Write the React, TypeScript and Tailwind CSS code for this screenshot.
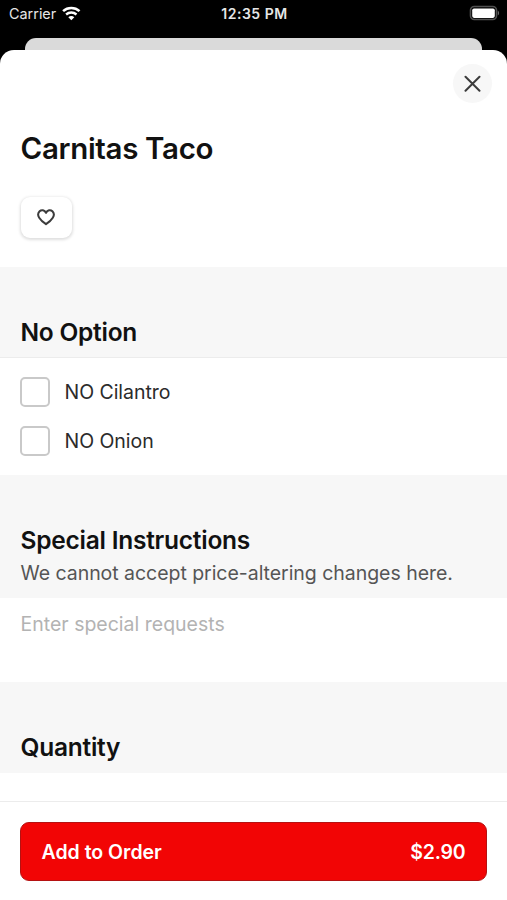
import React, { useState } from 'react';

const OPTIONS = [
    { id: 'cilantro', label: 'NO Cilantro' },
    { id: 'onion', label: 'NO Onion' }
];

const StatusBar: React.FC = () => (
    <div className="h-[38px] shrink-0 grid grid-cols-3 items-start pt-[5px] pl-[9px] pr-[7px] text-[#e6e6e6] text-[14px] leading-[18px]">
        <div className="flex items-center gap-[6px]">
            <span className="text-[14.4px]">Carrier</span>
            <svg width="19" height="15" viewBox="0 0 19 15" fill="none" stroke="#fff" className="-mt-[2px]">
                <path d="M1.1 5.1C5.8.9 12.8.9 17.5 5.1" strokeWidth="2.6" />
                <path d="M4.1 8.5C7.1 5.9 11.5 5.9 14.5 8.5" strokeWidth="2.4" />
                <path d="M6.3 11.2C8 9.7 10.6 9.7 12.3 11.2L9.3 14.3Z" fill="#fff" stroke="none" />
            </svg>
        </div>
        <span className="text-center font-semibold whitespace-nowrap tracking-[0.5px]">12:35 PM</span>
        <svg width="31" height="16" viewBox="0 0 31 16" className="justify-self-end">
            <rect x="1.5" y="1.5" width="26" height="13" rx="3.8" fill="none" stroke="#505050" strokeWidth="1.6" />
            <rect x="3.2" y="3.5" width="22.6" height="9.4" rx="1.8" fill="#fff" />
            <path d="M28.8 5.7C30.5 6.4 30.5 9.6 28.8 10.3Z" fill="#666" />
        </svg>
    </div>
);

interface SectionHeaderProps {
    title: string;
    subtitle?: string;
    className: string;
}

const SectionHeader: React.FC<SectionHeaderProps> = ({ title, subtitle, className }) => (
    <div className={`bg-[#f7f7f7] px-[20.5px] shrink-0 ${className}`}>
        <h2 className="text-[24.5px] leading-[30px] font-semibold tracking-[-0.24px] text-[#111]">{title}</h2>
        {subtitle && <p className="mt-[6px] text-[19.5px] leading-[24px] tracking-[-0.04px] text-[#555] whitespace-nowrap">{subtitle}</p>}
    </div>
);

export default function App() {
    const [checked, setChecked] = useState<string[]>([]);
    const [liked, setLiked] = useState(false);
    const [notes, setNotes] = useState('');

    const toggle = (id: string) => {
        setChecked(prev => (prev.includes(id) ? prev.filter(c => c !== id) : [...prev, id]));
    };

    return (
        <div className="w-[507px] h-[900px] bg-black flex flex-col overflow-hidden font-[Inter,sans-serif]">
            <StatusBar />

            {/* Edge of the screen behind the sheet */}
            <div className="h-3 shrink-0 mx-[25px] bg-[#dadada] rounded-t-[11px]" />

            {/* Sheet */}
            <div className="flex-1 min-h-0 bg-white rounded-t-[14px] flex flex-col">
                <div className="h-[217px] shrink-0 flex flex-col">
                    <div className="flex justify-end pt-[14px] pr-[15px]">
                        <button className="size-[39px] rounded-full bg-[#f7f7f7] flex items-center justify-center">
                            <svg width="17" height="17" viewBox="0 0 17 17" fill="none" stroke="#3c3c3c" strokeWidth="2" strokeLinecap="round">
                                <path d="M1.5 1.8L15.5 15.8M15.5 1.8L1.5 15.8" />
                            </svg>
                        </button>
                    </div>
                    <h1 className="mt-[27px] px-[20.5px] text-[29.5px] leading-[36px] font-semibold tracking-[-0.33px] text-[#111]">Carnitas Taco</h1>
                    <button
                        onClick={() => setLiked(!liked)}
                        className="mt-[31px] ml-[21px] w-[51px] h-[41px] rounded-[9px] bg-white shadow-[0_1px_3px_1px_rgba(0,0,0,0.13)] flex items-center justify-center pr-px"
                    >
                        <svg width="18" height="17" viewBox="0 0 18 17" fill={liked ? '#3c3c3c' : 'none'} stroke="#3c3c3c" strokeWidth="2" strokeLinejoin="round">
                            <path d="M9 3.9C7.6.9 4.4.6 2.6 2.3C.9 4 .9 6.7 2.2 8.7C3.7 11.1 6.2 13.3 9 15.2C11.8 13.3 14.3 11.1 15.8 8.7C17.1 6.7 17.1 4 15.4 2.3C13.6.6 10.4.9 9 3.9Z" />
                        </svg>
                    </button>
                </div>

                {/* Modifiers */}
                <SectionHeader title="No Option" className="h-[91px] pt-[50px] border-b border-[#ececec]" />
                <div className="h-[117px] shrink-0 px-5 pt-[19px] flex flex-col gap-[19px]">
                    {OPTIONS.map(option => (
                        <label key={option.id} className="flex items-center gap-[14.5px] h-[30px]">
                            <input
                                type="checkbox"
                                checked={checked.includes(option.id)}
                                onChange={() => toggle(option.id)}
                                className="appearance-none size-[30px] rounded-[5px] border-2 border-[#c9c9c9] bg-white checked:bg-[#f20505]"
                            />
                            <span className="text-[19.5px] leading-[24px] tracking-[-0.04px] text-[#2b2b2b]">{option.label}</span>
                        </label>
                    ))}
                </div>

                {/* Instructions */}
                <SectionHeader
                    title="Special Instructions"
                    subtitle="We cannot accept price-altering changes here."
                    className="h-[123px] pt-[50px]"
                />
                <textarea
                    value={notes}
                    onChange={e => setNotes(e.target.value)}
                    placeholder="Enter special requests"
                    className="h-[84px] shrink-0 px-[20.5px] pt-[14px] resize-none outline-none text-[19.5px] leading-[24px] text-[#2b2b2b] placeholder:text-[#b3b3b3]"
                />

                <SectionHeader title="Quantity" className="h-[91px] pt-[50px]" />

                {/* Footer */}
                <div className="mt-auto h-[99px] shrink-0 border-t border-[#ececec] px-5 pt-5">
                    <button className="w-full h-[59px] rounded-[9px] bg-[#f20505] border border-[#b51212] pl-[20.5px] pr-[20.5px] pt-[2px] flex items-center justify-between text-white text-[19.5px] font-semibold">
                        <span>Add to Order</span>
                        <span className="tracking-[-0.2px]">$2.90</span>
                    </button>
                </div>
            </div>
        </div>
    );
}
